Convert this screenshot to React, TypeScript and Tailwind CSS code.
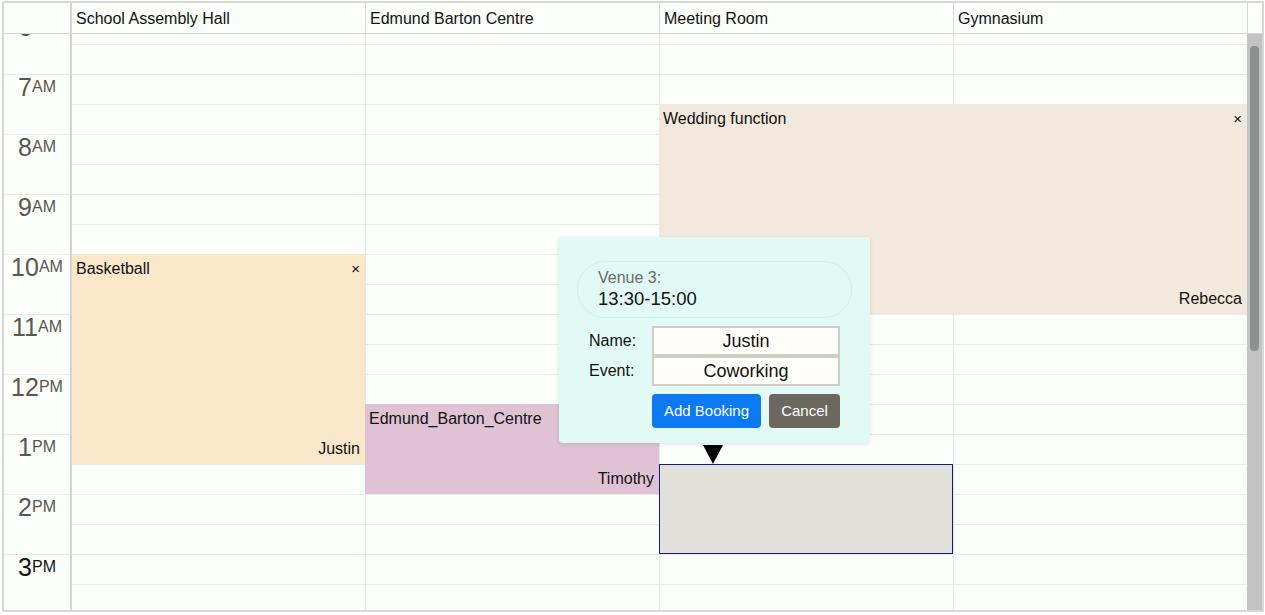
import React from 'react';

const venues = ['School Assembly Hall', 'Edmund Barton Centre', 'Meeting Room', 'Gymnasium'];

const hours = [
  { n: '6', s: 'AM' },
  { n: '7', s: 'AM' },
  { n: '8', s: 'AM' },
  { n: '9', s: 'AM' },
  { n: '10', s: 'AM' },
  { n: '11', s: 'AM' },
  { n: '12', s: 'PM' },
  { n: '1', s: 'PM' },
  { n: '2', s: 'PM' },
  { n: '3', s: 'PM', now: true },
];

const slots = Array.from({ length: 22 }, (_, i) => i);

interface Booking {
  title: string;
  who: string;
  left: number;
  top: number;
  width: number;
  height: number;
  color: string;
  close?: boolean;
}

const bookings: Booking[] = [
  { title: 'Wedding function', who: 'Rebecca', left: 587, top: 90, width: 588, height: 210, color: '#f2e8db', close: true },
  { title: 'Basketball', who: 'Justin', left: 0, top: 240, width: 293, height: 210, color: '#fbe8cb', close: true },
  { title: 'Edmund_Barton_Centre', who: 'Timothy', left: 293, top: 390, width: 294, height: 90, color: '#dfc2d4', close: true },
];

const BookingBlock = ({ b }: { b: Booking }) => (
  <div
    className="absolute flex flex-col justify-between pl-[4px] pr-[5px] pt-[6px] pb-[6px] text-[16px] leading-[18px] text-[#111]"
    style={{ left: b.left, top: b.top, width: b.width, height: b.height, background: b.color }}
  >
    <div className="flex justify-between items-center">
      <span>{b.title}</span>
      {b.close && <span className="text-[15px]">×</span>}
    </div>
    <div className="text-right">{b.who}</div>
  </div>
);

export default function App() {
  return (
    <div className="relative w-[1265px] h-[615px] bg-white pt-px pl-[2px] font-['Liberation_Sans',Arial,sans-serif]">
      <div className="w-[1262px] h-[611px] border-2 border-[#d7d7d7] flex flex-col bg-[#fbfefb]">
        {/* header */}
        <div className="flex h-[31px] border-b border-[#d6d6d6] shrink-0">
          <div className="w-[68px] border-r-2 border-[#d4d4d4]" />
          {venues.map((v, i) => (
            <div
              key={v}
              className={`${i === 0 ? 'w-[293px]' : 'w-[294px] border-l border-[#d6d6d6]'} px-[4px] pt-px text-[16px] leading-[29px] text-[#111]`}
            >
              {v}
            </div>
          ))}
          <div className="w-[15px] border-l border-[#d6d6d6]" />
        </div>

        {/* body */}
        <div className="flex flex-1 overflow-hidden">
          <div className="flex-1 overflow-hidden">
            <div className="flex mt-[-20px]">
              <div className="w-[68px] border-r-2 border-[#d4d4d4] shrink-0">
                {hours.map((h) => (
                  <div
                    key={h.n + h.s}
                    className={`h-[60px] border-t border-[#e7ece7] flex justify-center items-start ${h.now ? 'text-[#141414]' : 'text-[#5c574c]'}`}
                  >
                    <span className="text-[25px] leading-none">{h.n}</span>
                    <span className="text-[16px] leading-none mt-[4px]">{h.s}</span>
                  </div>
                ))}
              </div>
              <div className="relative flex">
                {venues.map((v, i) => (
                  <div key={v} className={i === 0 ? 'w-[293px]' : 'w-[294px] border-l border-[#e3e9e3]'}>
                    {slots.map((s) => (
                      <div key={s} className="h-[30px] border-t border-[#e6ece6]" />
                    ))}
                  </div>
                ))}
                {bookings.map((b) => (
                  <BookingBlock key={b.title} b={b} />
                ))}
                <div className="absolute left-[587px] top-[450px] w-[294px] h-[90px] bg-[#e2e0da] border border-[#1b1a7a]" />
              </div>
            </div>
          </div>
          {/* scrollbar */}
          <div className="w-[15px] bg-[#c3c3c3] pt-[12px] px-[3px]">
            <div className="h-[305px] rounded-[4px] bg-[#8e928f]" />
          </div>
        </div>
      </div>

      {/* booking popover */}
      <div className="absolute left-[559px] top-[237px] w-[311px] h-[206px] bg-[#e2faf6] rounded-[4px] shadow-[0_1px_4px_rgba(0,0,0,0.12)] px-[18px] pt-[24px]">
        <div className="h-[57px] rounded-[28px] border border-[#d2eee8] pl-[20px] pt-[7px]">
          <div className="text-[16px] leading-[18px] text-[#6a6a64]">Venue 3:</div>
          <div className="text-[18.5px] leading-[22px] mt-px text-[#111]">13:30-15:00</div>
        </div>
        <div className="px-[12px] mt-[8px]">
          <div className="grid grid-cols-[63px_188px] text-[16px] text-[#111]">
            <div className="h-[30px] flex items-center">Name:</div>
            <div className="h-[30px] border-2 border-[#d2cdc4] bg-[#fffefa] flex items-center justify-center text-[18px]">Justin</div>
            <div className="h-[30px] flex items-center">Event:</div>
            <div className="h-[30px] border-2 border-[#d2cdc4] bg-[#fffefa] flex items-center justify-center text-[18px]">Coworking</div>
          </div>
          <div className="flex gap-[8px] mt-[8px] ml-[63px]">
            <button className="w-[109px] h-[34px] rounded-[4px] bg-[#0b79f2] text-white text-[15px]">Add Booking</button>
            <button className="w-[71px] h-[34px] rounded-[4px] bg-[#6d685f] text-white text-[15px]">Cancel</button>
          </div>
        </div>
      </div>
      <svg className="absolute left-[703px] top-[445px]" width="20" height="19" viewBox="0 0 20 19">
        <polygon points="0,0 20,0 10,19" fill="#000" />
      </svg>
    </div>
  );
}
